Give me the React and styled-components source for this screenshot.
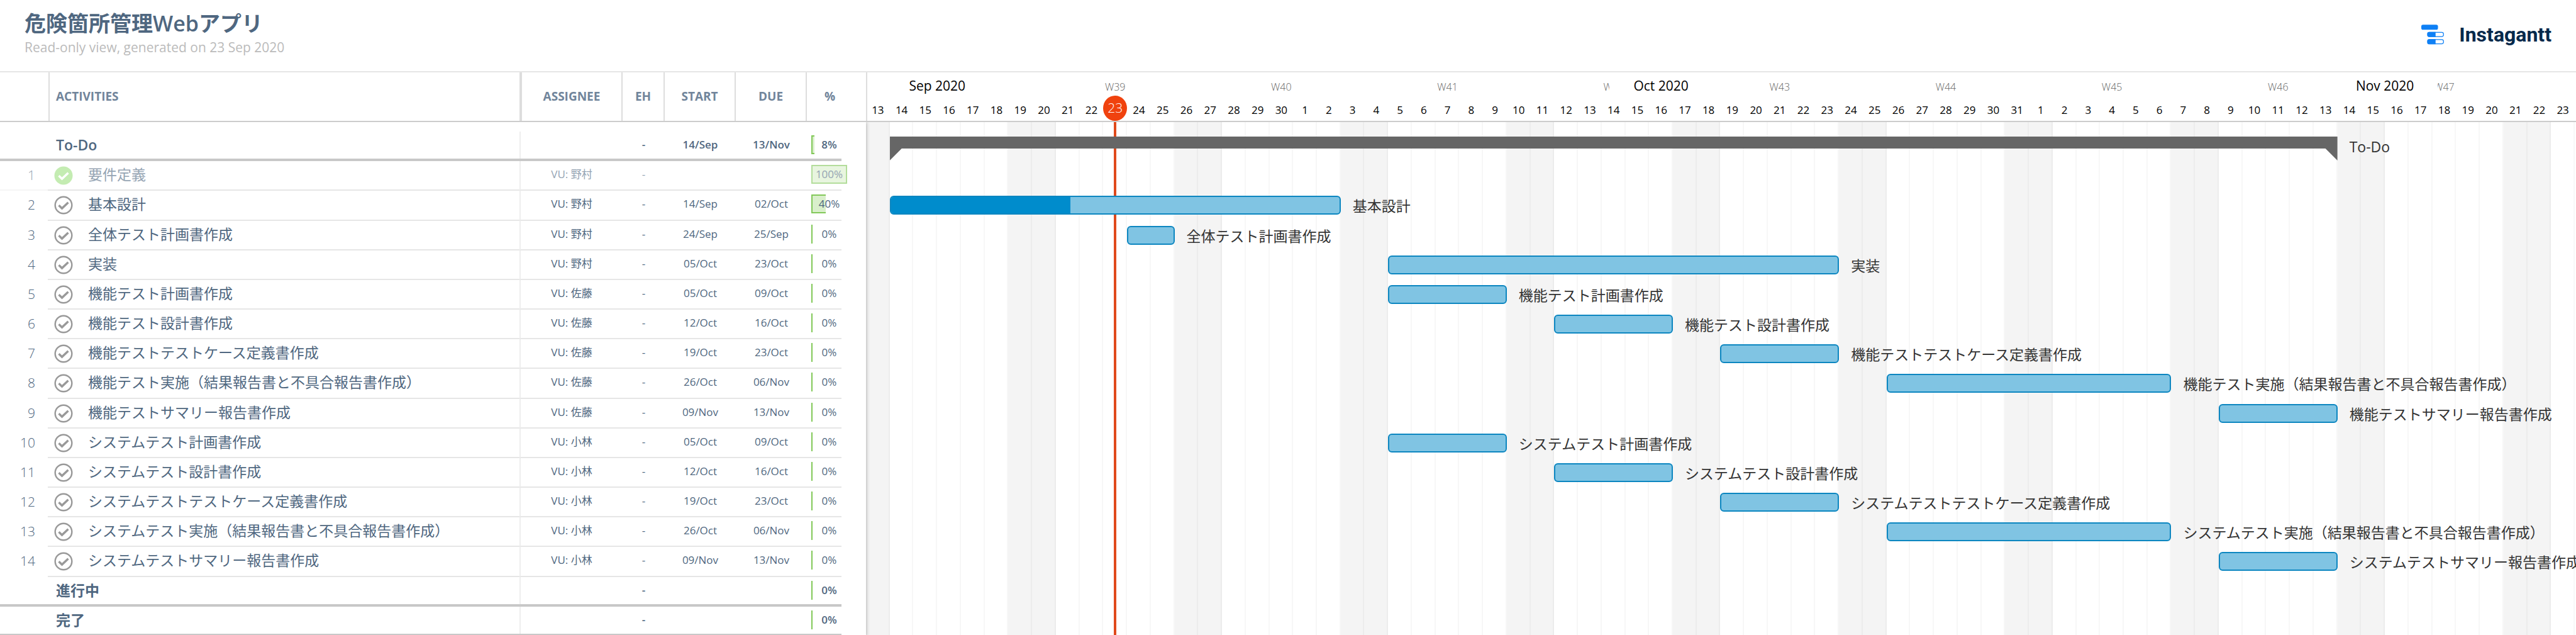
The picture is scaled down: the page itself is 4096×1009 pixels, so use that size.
import React from 'react';
import styled, { createGlobalStyle, css } from 'styled-components';

const GlobalStyle = createGlobalStyle`
  *, *::before, *::after { box-sizing: border-box; }
  body {
    margin: 0;
    background: #fff;
    color: #4f6780;
    font-family: "Open Sans", "Noto Sans CJK JP", sans-serif;
  }
`;

const DAY_COUNT = 72;

const tasks = [
  { name: '要件定義', who: '野村', pct: 100, done: true },
  { name: '基本設計', who: '野村', start: '14/Sep', due: '02/Oct', pct: 40, from: 2, days: 19 },
  { name: '全体テスト計画書作成', who: '野村', start: '24/Sep', due: '25/Sep', pct: 0, from: 12, days: 2 },
  { name: '実装', who: '野村', start: '05/Oct', due: '23/Oct', pct: 0, from: 23, days: 19 },
  { name: '機能テスト計画書作成', who: '佐藤', start: '05/Oct', due: '09/Oct', pct: 0, from: 23, days: 5 },
  { name: '機能テスト設計書作成', who: '佐藤', start: '12/Oct', due: '16/Oct', pct: 0, from: 30, days: 5 },
  { name: '機能テストテストケース定義書作成', who: '佐藤', start: '19/Oct', due: '23/Oct', pct: 0, from: 37, days: 5 },
  { name: '機能テスト実施（結果報告書と不具合報告書作成）', who: '佐藤', start: '26/Oct', due: '06/Nov', pct: 0, from: 44, days: 12 },
  { name: '機能テストサマリー報告書作成', who: '佐藤', start: '09/Nov', due: '13/Nov', pct: 0, from: 58, days: 5 },
  { name: 'システムテスト計画書作成', who: '小林', start: '05/Oct', due: '09/Oct', pct: 0, from: 23, days: 5 },
  { name: 'システムテスト設計書作成', who: '小林', start: '12/Oct', due: '16/Oct', pct: 0, from: 30, days: 5 },
  { name: 'システムテストテストケース定義書作成', who: '小林', start: '19/Oct', due: '23/Oct', pct: 0, from: 37, days: 5 },
  { name: 'システムテスト実施（結果報告書と不具合報告書作成）', who: '小林', start: '26/Oct', due: '06/Nov', pct: 0, from: 44, days: 12 },
  { name: 'システムテストサマリー報告書作成', who: '小林', start: '09/Nov', due: '13/Nov', pct: 0, from: 58, days: 5 },
];

const rows = [
  { group: true, name: 'To-Do', start: '14/Sep', due: '13/Nov', pct: 8, from: 2, days: 61 },
  ...tasks.map((task, i) => ({ ...task, number: i + 1 })),
  { group: true, name: '進行中', pct: 0 },
  { group: true, name: '完了', pct: 0 },
];

const firstDay = Date.UTC(2020, 8, 13);
const days = Array.from({ length: DAY_COUNT }, (_, i) => {
  const date = new Date(firstDay + i * 86400000);
  return {
    column: i + 1,
    label: date.getUTCDate(),
    weekend: date.getUTCDay() % 6 === 0,
    today: i === 10,
  };
});

const weeks = Array.from({ length: 9 }, (_, i) => ({ label: `W${39 + i}`, from: 8 + i * 7, span: 7 }));

const months = [
  { label: 'Sep 2020', from: 1, span: 6 },
  { label: 'Oct 2020', from: 19, span: 31 },
  { label: 'Nov 2020', from: 57, span: 16 },
];

const rowTracks = css`
  display: grid;
  grid-template-rows: 15px repeat(${rows.length}, minmax(47px, 1fr));
`;

const dayTracks = css`
  grid-template-columns: repeat(${DAY_COUNT}, minmax(0, 1fr));
  padding-right: 2px;
`;

const Page = styled.div`
  display: flex;
  flex-direction: column;
  height: 100vh;
  overflow: hidden;
`;

const TopBar = styled.header`
  display: flex;
  justify-content: space-between;
  align-items: flex-start;
  height: 115px;
  flex: none;
  padding: 15px 39px 0;
  border-bottom: 2px solid #e6e6e6;
`;

const Title = styled.h1`
  margin: 0 0 2px;
  font-size: 34px;
  line-height: 44px;
  font-weight: 600;
`;

const Subtitle = styled.p`
  margin: 0;
  font-size: 21px;
  line-height: 28px;
  color: #bbb;
`;

const Brand = styled.a`
  display: flex;
  align-items: center;
  gap: 24px;
  padding-top: 21px;
  color: #05294b;
  font-family: Roboto, sans-serif;
  font-size: 32px;
  line-height: 38px;
  font-weight: 700;
  text-decoration: none;
`;

const Gantt = styled.main`
  display: flex;
  flex: 1;
  margin-bottom: -2px;
`;

const Activities = styled.table`
  display: flex;
  flex-direction: column;
  flex: none;
  width: 1377px;
`;

const Head = styled.thead`
  display: block;
  position: relative;
  z-index: 2;
  background: #fff;
`;

const HeadRow = styled.tr`
  display: grid;
  grid-template-columns: 79px 751px 160px 67px 113px 113px 94px;
  height: 79px;
  border-bottom: 2px solid #ccc;
`;

const HeadCell = styled.th`
  padding: 0 ${(p) => p.$right || 0}px 0 ${(p) => p.$left || 0}px;
  border-right: ${(p) => (p.$rule ?? 2)}px solid #ddd;
  color: #71859b;
  font-size: 19px;
  line-height: 77px;
  font-weight: 700;
  text-align: ${(p) => (p.$left ? 'left' : 'center')};
`;

const Body = styled.tbody`
  ${rowTracks}
  flex: 1;
  position: relative;
  z-index: 1;
  background: #fff;
  box-shadow: 0 0 6px rgba(0, 0, 0, 0.35);
`;

const Row = styled.tr`
  display: grid;
  grid-template-columns: 76px 750px 164px 67px 113px 113px 55px;
  grid-row: ${(p) => p.$row};
  width: 1338px;
  color: ${(p) => (p.$done ? '#95a4b3' : 'inherit')};
  font-weight: ${(p) => (p.$group ? 600 : 400)};
  border-bottom: ${(p) => (p.$group ? '4px solid #c8c8c8' : 'none')};
`;

const cellRule = css`
  border-bottom: ${(p) => (p.$group ? 'none' : '2px solid #e6e6e6')};
`;

const NumberCell = styled.td`
  padding: 0 20px 0 0;
  border-bottom: ${(p) => (p.$done ? '2px solid #f5f5f5' : 'none')};
  font-size: 21px;
  line-height: 45px;
  font-weight: 300;
  text-align: right;
`;

const NameCell = styled.td`
  ${cellRule}
  display: flex;
  align-items: flex-start;
  gap: 24px;
  padding: 0 0 0 ${(p) => (p.$group ? 13 : 10)}px;
  font-size: 23px;
  line-height: 43px;
  white-space: nowrap;
`;

const MetaCell = styled.td`
  ${cellRule}
  padding: 0;
  border-left: ${(p) => (p.$ruled ? '2px solid #eee' : 'none')};
  font-size: 17px;
  line-height: 41px;
  text-align: center;
`;

const PercentCell = styled.td`
  ${cellRule}
  padding: 6px 0 0 7px;
`;

const Percent = styled.div`
  position: relative;
  width: 57px;
  height: 30px;
  font-size: 17px;
  line-height: 30px;
  text-align: center;
`;

const PercentFill = styled.span`
  position: absolute;
  inset: 0 auto 0 0;
  min-width: 2px;
  border: 2px solid #82c859;
  border-width: ${(p) => (p.$pct ? '2px' : '0')} ${(p) => (p.$pct === 100 ? '2px' : '0')} ${(p) => (p.$pct ? '2px' : '0')} 2px;
  background: #d9efcb;
  opacity: ${(p) => (p.$pct === 100 ? 0.6 : 1)};
`;

const PercentText = styled.span`
  position: relative;
`;

const CheckIcon = styled.svg`
  flex: none;
  width: 30px;
  height: 30px;
  margin-top: 8px;
`;

const Timeline = styled.section`
  display: flex;
  flex-direction: column;
  flex: 1;
  min-width: 0;
`;

const Scale = styled.div`
  ${dayTracks}
  display: grid;
  grid-template-rows: 42px 35px;
  height: 79px;
  position: relative;
  z-index: 2;
  background: #fff;
  border-bottom: 2px solid #ccc;
  box-shadow: inset 2px 0 #ddd;
`;

const WeekLabel = styled.span`
  grid-row: 1;
  grid-column: ${(p) => p.$from} / span ${(p) => p.$span};
  justify-self: center;
  color: #666;
  font-size: 16px;
  line-height: 24px;
  font-weight: 300;
  padding-top: 11px;
`;

const MonthLabel = styled.span`
  grid-row: 1;
  grid-column: ${(p) => p.$from} / span ${(p) => p.$span};
  justify-self: center;
  align-self: start;
  margin-top: 6px;
  padding: 0 38px;
  background: #fff;
  color: #000;
  font-size: 21px;
  line-height: 30px;
`;

const DayLabel = styled.span`
  grid-row: 2;
  grid-column: ${(p) => p.$column};
  color: #000;
  font-size: 17px;
  line-height: 36px;
  text-align: center;
`;

const TodayLabel = styled.time`
  grid-row: 2;
  grid-column: ${(p) => p.$column};
  align-self: end;
  height: 40px;
  border-radius: 50%;
  background: #f0420e;
  color: #fff;
  font-size: 21px;
  line-height: 38px;
  font-weight: 300;
  text-align: center;
`;

const Chart = styled.div`
  ${dayTracks}
  ${rowTracks}
  flex: 1;
`;

const DayStripe = styled.div`
  grid-row: 1 / -1;
  grid-column: ${(p) => p.$column};
  background: ${(p) => (p.$weekend ? '#f4f4f4' : '#fff')};
  border-right: 2px solid rgba(0, 0, 0, 0.03);
`;

const TodayLine = styled.div`
  grid-row: 1 / -1;
  grid-column: 11;
  justify-self: center;
  width: 4px;
  background: #e04a1c;
`;

const place = css`
  grid-row: ${(p) => p.$row};
  grid-column: ${(p) => p.$from} / span ${(p) => p.$days};
`;

const Bar = styled.div`
  ${place}
  height: 30px;
  margin-top: 8px;
  overflow: hidden;
  border: 2px solid #0c86c0;
  border-radius: 6px;
  background: #80c4e3;
`;

const BarProgress = styled.div`
  height: 100%;
  background: #008ccc;
`;

const GroupBar = styled.div`
  ${place}
  height: 38px;
  margin-top: 8px;
  background: #666;
  clip-path: polygon(0 0, 100% 0, 100% 100%, calc(100% - 19px) 50%, 19px 50%, 0 100%);
`;

const BarLabel = styled.span`
  grid-row: ${(p) => p.$row};
  grid-column: ${(p) => p.$from} / -1;
  padding: 2px 0 0 19px;
  color: #333;
  font-size: 23px;
  line-height: 45px;
  white-space: nowrap;
`;

function Check({ done }) {
  return (
    <CheckIcon viewBox="0 0 32 32" role="img" aria-label={done ? 'Completed' : 'Open'}>
      {done ? (
        <circle cx="16" cy="16" r="15.5" fill="#c4ecb2" />
      ) : (
        <circle cx="16" cy="16" r="14.2" fill="none" stroke="#999" strokeWidth="2.6" />
      )}
      <path d="M8 16.2l5.4 5.2L24 11.4" fill="none" stroke={done ? '#fff' : '#999'} strokeWidth="3.6" />
    </CheckIcon>
  );
}

function Logo() {
  return (
    <svg width="36" height="32" viewBox="0 0 38 33" aria-hidden="true">
      <rect x="0" y="0" width="28" height="8.4" rx="3" fill="#0f80f5" />
      <rect x="10.7" y="12.7" width="26.6" height="7" rx="3" fill="#fff" stroke="#0f80f5" strokeWidth="1.3" />
      <path d="M24 12v8.4H13a3 3 0 0 1-3-3V15a3 3 0 0 1 3-3z" fill="#0f80f5" />
      <rect x="10.7" y="24.9" width="26.6" height="7" rx="3" fill="#fff" stroke="#0f80f5" strokeWidth="1.3" />
      <path d="M24 24.2v8.4H13a3 3 0 0 1-3-3v-2.4a3 3 0 0 1 3-3z" fill="#0f80f5" />
    </svg>
  );
}

export default function App() {
  return (
    <Page>
      <GlobalStyle />
      <TopBar>
        <div>
          <Title>危険箇所管理Webアプリ</Title>
          <Subtitle>Read-only view, generated on 23 Sep 2020</Subtitle>
        </div>
        <Brand href="#">
          <Logo />
          Instagantt
        </Brand>
      </TopBar>
      <Gantt>
        <Activities>
          <Head>
            <HeadRow>
              <HeadCell />
              <HeadCell $left={10} $rule={4}>ACTIVITIES</HeadCell>
              <HeadCell>ASSIGNEE</HeadCell>
              <HeadCell>EH</HeadCell>
              <HeadCell>START</HeadCell>
              <HeadCell>DUE</HeadCell>
              <HeadCell $right={21} $rule={0}>%</HeadCell>
            </HeadRow>
          </Head>
          <Body>
            {rows.map((row, i) => (
              <Row key={row.name} $row={i + 2} $group={row.group} $done={row.done}>
                <NumberCell $done={row.done}>{row.number}</NumberCell>
                <NameCell $group={row.group}>
                  {!row.group && <Check done={row.done} />}
                  {row.name}
                </NameCell>
                <MetaCell $group={row.group} $ruled>{row.who && `VU: ${row.who}`}</MetaCell>
                <MetaCell $group={row.group}>-</MetaCell>
                <MetaCell $group={row.group}>{row.start}</MetaCell>
                <MetaCell $group={row.group}>{row.due}</MetaCell>
                <PercentCell $group={row.group}>
                  <Percent>
                    <PercentFill $pct={row.pct} style={{ width: `${row.pct}%` }} />
                    <PercentText>{row.pct}%</PercentText>
                  </Percent>
                </PercentCell>
              </Row>
            ))}
          </Body>
        </Activities>
        <Timeline>
          <Scale>
            {weeks.map((week) => (
              <WeekLabel key={week.label} $from={week.from} $span={week.span}>{week.label}</WeekLabel>
            ))}
            {months.map((month) => (
              <MonthLabel key={month.label} $from={month.from} $span={month.span}>{month.label}</MonthLabel>
            ))}
            {days.map((day) =>
              day.today ? (
                <TodayLabel key={day.column} $column={day.column}>{day.label}</TodayLabel>
              ) : (
                <DayLabel key={day.column} $column={day.column}>{day.label}</DayLabel>
              )
            )}
          </Scale>
          <Chart>
            {days.map((day) => (
              <DayStripe key={day.column} $column={day.column} $weekend={day.weekend} />
            ))}
            <TodayLine />
            {rows.map((row, i) =>
              row.from ? (
                <React.Fragment key={row.name}>
                  {row.group ? (
                    <GroupBar $row={i + 2} $from={row.from} $days={row.days} />
                  ) : (
                    <Bar $row={i + 2} $from={row.from} $days={row.days}>
                      <BarProgress style={{ width: `${row.pct}%` }} />
                    </Bar>
                  )}
                  <BarLabel $row={i + 2} $from={row.from + row.days}>{row.name}</BarLabel>
                </React.Fragment>
              ) : null
            )}
          </Chart>
        </Timeline>
      </Gantt>
    </Page>
  );
}
